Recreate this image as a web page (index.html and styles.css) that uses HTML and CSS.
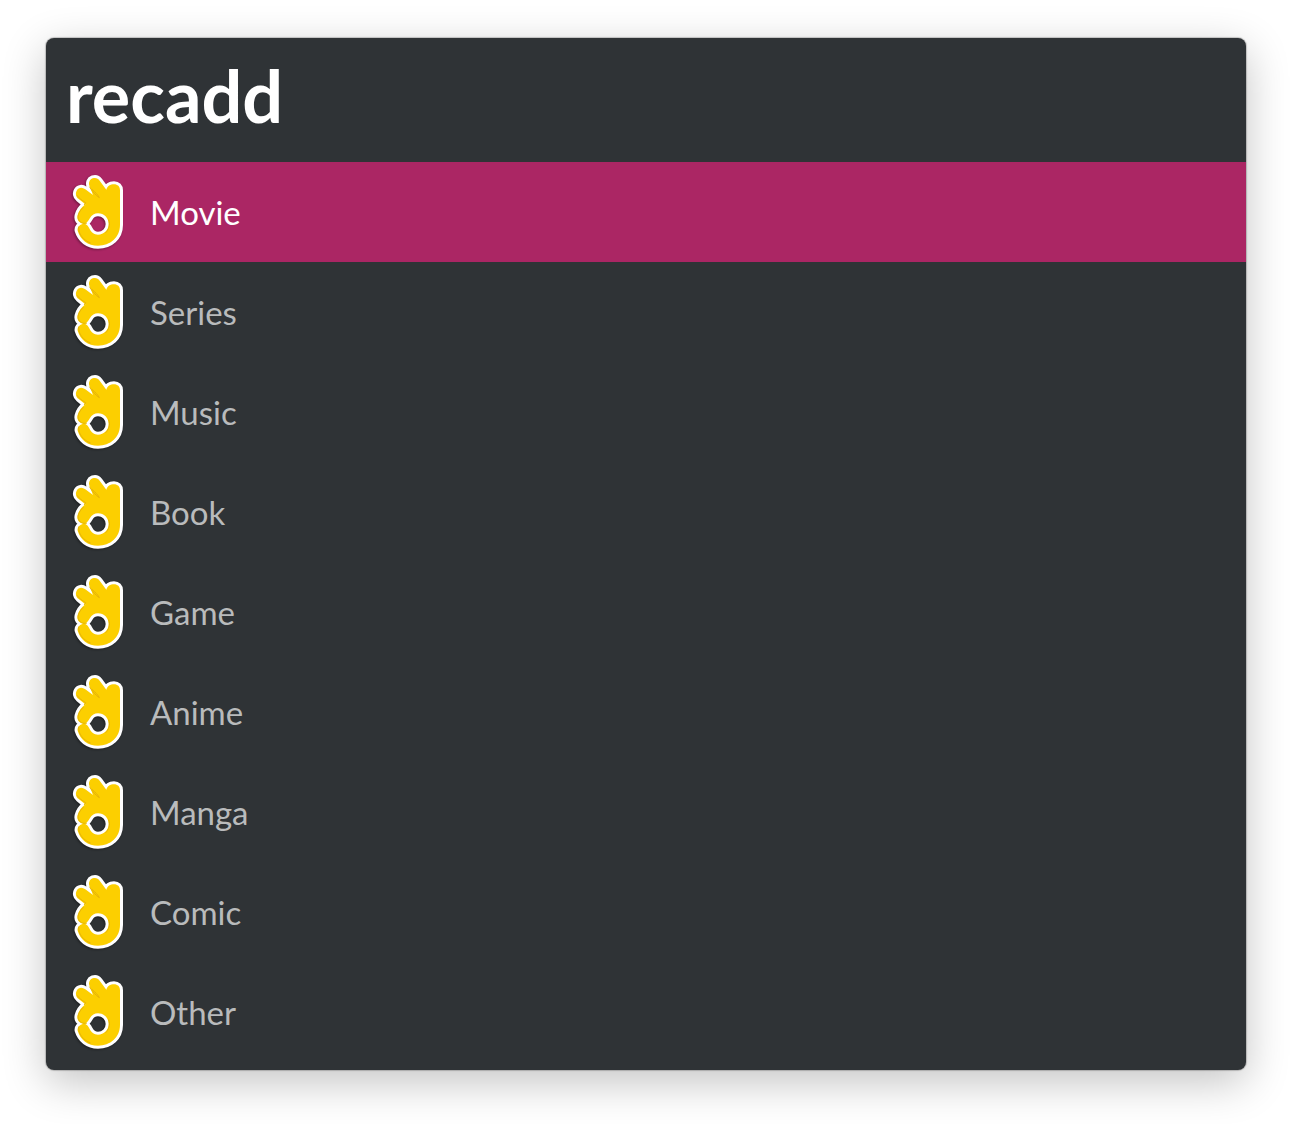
FILE: index.html
```html
<!DOCTYPE html>
<html lang="en">
<head>
<meta charset="utf-8">
<title>recadd</title>
<link rel="stylesheet" href="styles.css">
</head>
<body>
<svg class="sprite" aria-hidden="true">
  <symbol id="hand" viewBox="30 21 168 240">
    <path class="hand-shape" fill-rule="evenodd" d="M180 76V180C180 217 151 242 114 242C84 242 61 224 53 197C51 187 58 179 70 176C56 174 50 163 53 151C56 138 64 127 76 118L55 101C47 95 46 84 50 77C56 67 66 66 76 73L99 90L89 64C84 54 89 43 98 40C107 37 114 40 119 47L139 74C142 63 151 58 162 58C173 58 180 65 180 76ZM75 176C82 173 86 166 90 159C95 150 104 145 114 145C132 145 146 159 146 177C146 195 132 209 114 209C102 209 94 202 89 192C85 184 82 179 75 176Z"/>
    <path class="hand-crease" d="M89 66C97 80 107 91 118 98C113 88 106 82 97 74M52 92C57 101 67 106 77 113L73 119M70 127C54 142 49 158 60 170C66 175 72 175 79 175M56 186C54 206 69 225 91 234M146 165C152 179 146 195 137 203"/>
  </symbol>
</svg>
<main class="launcher">
  <input class="query" type="text" value="recadd" aria-label="Search" spellcheck="false">
  <ul class="results">
    <li><button class="result selected" type="button"><svg class="icon" aria-hidden="true"><use href="#hand"/></svg>Movie</button></li>
    <li><button class="result" type="button"><svg class="icon" aria-hidden="true"><use href="#hand"/></svg>Series</button></li>
    <li><button class="result" type="button"><svg class="icon" aria-hidden="true"><use href="#hand"/></svg>Music</button></li>
    <li><button class="result" type="button"><svg class="icon" aria-hidden="true"><use href="#hand"/></svg>Book</button></li>
    <li><button class="result" type="button"><svg class="icon" aria-hidden="true"><use href="#hand"/></svg>Game</button></li>
    <li><button class="result" type="button"><svg class="icon" aria-hidden="true"><use href="#hand"/></svg>Anime</button></li>
    <li><button class="result" type="button"><svg class="icon" aria-hidden="true"><use href="#hand"/></svg>Manga</button></li>
    <li><button class="result" type="button"><svg class="icon" aria-hidden="true"><use href="#hand"/></svg>Comic</button></li>
    <li><button class="result" type="button"><svg class="icon" aria-hidden="true"><use href="#hand"/></svg>Other</button></li>
  </ul>
</main>
</body>
</html>
```
FILE: styles.css
```css
* {
  box-sizing: border-box;
}

body {
  margin: 0;
  padding: 38px 46px 54px;
  background: #fff;
  font-family: Lato, sans-serif;
}

.sprite {
  display: none;
}

.launcher {
  padding-bottom: 8px;
  border-radius: 8px;
  background: #2f3336;
  box-shadow: 0 0 1px 1px rgba(0, 0, 0, 0.2), 0 12px 44px rgba(0, 0, 0, 0.24);
}

.query {
  display: block;
  width: 100%;
  height: 124px;
  padding: 0 20px 10px;
  border: 0;
  outline: 0;
  background: transparent;
  color: #fff;
  font: 700 72px Lato, sans-serif;
}

.results {
  margin: 0;
  padding: 0;
  list-style: none;
}

.result {
  display: flex;
  align-items: center;
  gap: 24px;
  width: 100%;
  height: 100px;
  padding: 0 24px;
  border: 0;
  background: transparent;
  color: #b9bbbc;
  font: 400 33px Lato, sans-serif;
  text-align: left;
}

.selected {
  background: #ab2664;
  color: #fff;
}

.icon {
  width: 56px;
  height: 80px;
  filter: drop-shadow(-1px 1px 1px rgba(0, 0, 0, 0.35));
}

.hand-shape {
  fill: #fccf00;
  stroke: #fff;
  stroke-width: 18px;
  stroke-linejoin: round;
  paint-order: stroke;
}

.hand-crease {
  fill: none;
  stroke: #e6b408;
  stroke-width: 3px;
  stroke-linecap: round;
}
```
